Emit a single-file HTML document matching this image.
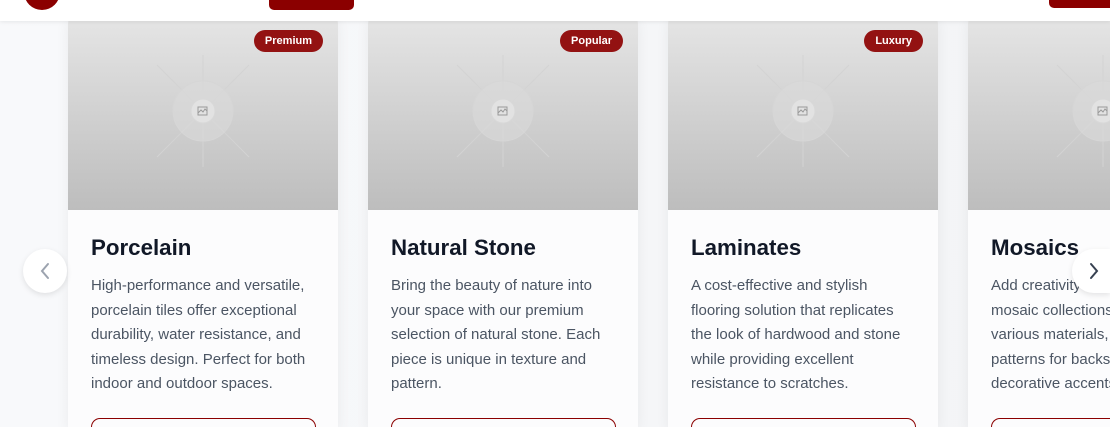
<!DOCTYPE html>
<html><head><style>
*{margin:0;padding:0;box-sizing:border-box}
html,body{width:1110px;height:427px;overflow:hidden}
body{background:linear-gradient(90deg,#f8f9fb,#f3f4f6);font-family:"Liberation Sans",sans-serif;position:relative}
.wrap{position:absolute;left:0;top:0;width:1110px;height:427px;overflow:hidden}
.hdr{position:absolute;left:0;top:0;width:1110px;height:21px;background:#fff;box-shadow:0 1px 4px rgba(0,0,0,.08);z-index:5}
.logo{position:absolute;left:24px;top:-26px;width:36px;height:36px;border-radius:50%;background:#8b0000}
.b1{position:absolute;left:269px;top:-20px;width:85px;height:30px;border-radius:5px;background:#8b0000}
.b2{position:absolute;left:1049px;top:-22px;width:61px;height:30px;border-radius:5px 0 0 5px;background:#8b0000}
.card{position:absolute;top:12px;width:270px;height:415px;background:#fcfcfd;border-radius:12px 12px 0 0;overflow:hidden;box-shadow:0 4px 14px rgba(0,0,0,.06)}
.img{height:198px;background:linear-gradient(#e6e6e6,#bdbdbd);position:relative}
.badge{position:absolute;right:15px;top:18px;background:#931212;color:#fff;font-size:11px;font-weight:bold;padding:0 11px;height:22px;line-height:22px;border-radius:11px}
.ph{position:absolute;left:79px;top:43px}
h3{position:absolute;left:23px;top:223px;font-size:22.3px;font-weight:bold;color:#111827}
p{position:absolute;left:23px;top:262px;width:225px;font-size:15px;line-height:24.5px;color:#4b5563}
.btn{position:absolute;left:23px;top:406px;width:225px;height:9px;border:1.3px solid #8b0000;border-bottom:none;border-radius:10px 10px 0 0}
.arr{position:absolute;top:249px;width:44px;height:44px;border-radius:50%;background:#fff;box-shadow:0 2px 6px rgba(0,0,0,.1);z-index:6}
</style></head><body><div class="wrap">
<div class="hdr"><div class="logo"></div><div class="b1"></div><div class="b2"></div></div>

<svg width="0" height="0" style="position:absolute"><defs><g id="ph" stroke="#d3d3d3" stroke-width="1" fill="none"><line x1="56" y1="0" x2="56" y2="112"/><line x1="0" y1="56" x2="112" y2="56"/><line x1="10" y1="10" x2="102" y2="102"/><line x1="102" y1="10" x2="10" y2="102"/><circle cx="56" cy="56" r="30" fill="#dcdcdc" fill-opacity=".5" stroke="#d6d6d6"/><circle cx="56" cy="56" r="12" fill="#e2e2e2" stroke="#d8d8d8"/><rect x="51" y="52" width="9" height="8" stroke="#999"/><path d="M51 58 l3-3 2 2 2-3 2 2" stroke="#999"/></g></defs></svg>

<div class="card" style="left:68px"><div class="img"><div class="badge">Premium</div><svg class="ph" width="112" height="112"><use href="#ph"/></svg></div>
<h3>Porcelain</h3><p>High-performance and versatile, porcelain tiles offer exceptional durability, water resistance, and timeless design. Perfect for both indoor and outdoor spaces.</p><div class="btn"></div></div>

<div class="card" style="left:368px"><div class="img"><div class="badge">Popular</div><svg class="ph" width="112" height="112"><use href="#ph"/></svg></div>
<h3>Natural Stone</h3><p>Bring the beauty of nature into your space with our premium selection of natural stone. Each piece is unique in texture and pattern.</p><div class="btn"></div></div>

<div class="card" style="left:668px"><div class="img"><div class="badge">Luxury</div><svg class="ph" width="112" height="112"><use href="#ph"/></svg></div>
<h3>Laminates</h3><p>A cost-effective and stylish flooring solution that replicates the look of hardwood and stone while providing excellent resistance to scratches.</p><div class="btn"></div></div>

<div class="card" style="left:968px;width:142px;border-radius:12px 0 0 0"><div class="img"><svg class="ph" width="112" height="112"><use href="#ph"/></svg></div>
<h3>Mosaics</h3><p style="width:119px;white-space:nowrap;overflow:hidden">Add creativity with our<br>mosaic collections, featuring<br>various materials, colors, and<br>patterns for backsplashes and<br>decorative accents.</p><div class="btn" style="width:119px;border-right:none;border-radius:10px 0 0 0"></div></div>

<div class="arr" style="left:23px"><svg width="44" height="44"><path d="M25 15 l-6 7 6 7" stroke="#9ca3af" stroke-width="2" fill="none" stroke-linecap="round"/></svg></div>
<div class="arr" style="left:1072px;width:38px;border-radius:22px 0 0 22px"><svg width="38" height="44"><path d="M19 15 l6 7 -6 7" stroke="#374151" stroke-width="2" fill="none" stroke-linecap="round"/></svg></div>
</div></body></html>
